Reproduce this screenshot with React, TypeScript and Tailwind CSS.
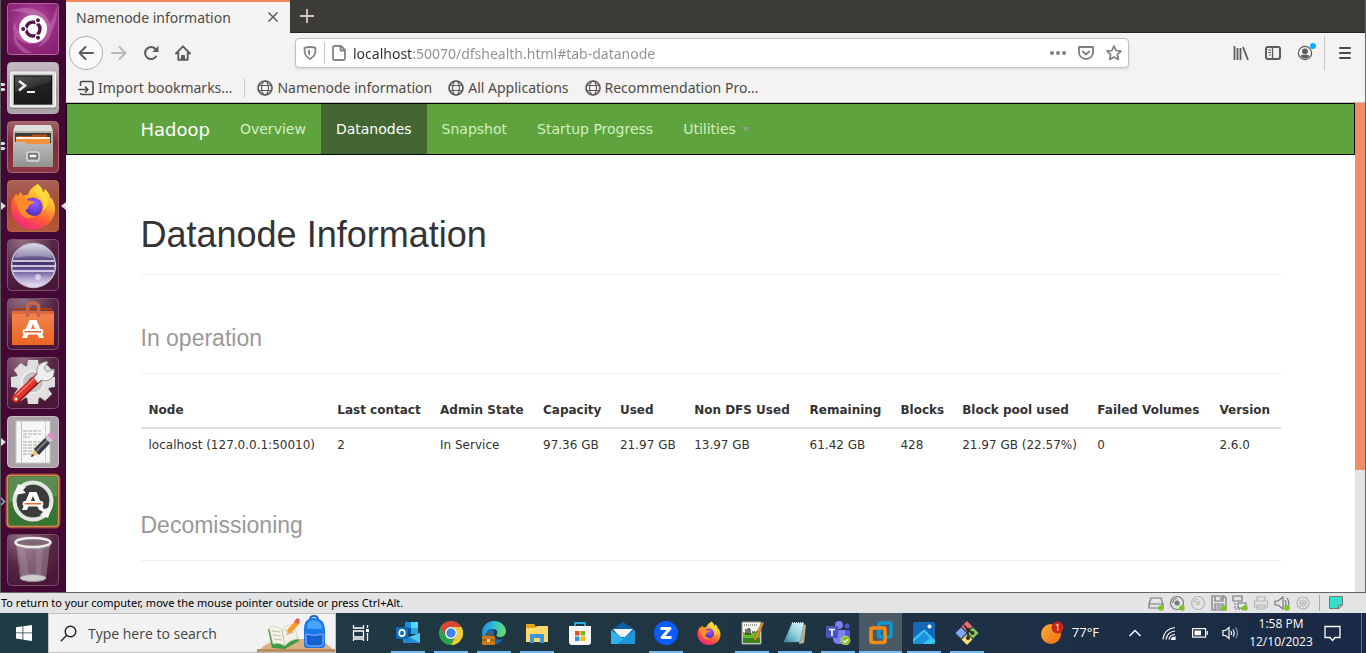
import React from "react";

type IconProps = { className?: string };

const FirefoxArt = ({ id, className }: { id: string; className?: string }) => (
  <svg viewBox="0 0 48 48" className={className} aria-hidden="true">
    <defs>
      <linearGradient id={id + "a"} x1="0.8" y1="0" x2="0.25" y2="1">
        <stop offset="0" stopColor="#fff44f" />
        <stop offset="0.35" stopColor="#ffb02e" />
        <stop offset="0.65" stopColor="#ff5a36" />
        <stop offset="1" stopColor="#f0208a" />
      </linearGradient>
      <radialGradient id={id + "b"} cx="0.6" cy="0.3" r="0.7">
        <stop offset="0" stopColor="#a05cff" />
        <stop offset="0.6" stopColor="#6b3fe0" />
        <stop offset="1" stopColor="#4a2bb5" />
      </radialGradient>
    </defs>
    <path
      d="M29 1c4 3 5 6 6 9 1-1 1-2 1-4 4 3 6 7 6 10l1-1c2 3 4 7 4 12 0 12-10 21-23 21S1 38 1 26C1 20 3 15 7 11l1 3 3-5 2 4c2 0 4-1 6-1 1-5 5-8 10-11z"
      fill={"url(#" + id + "a)"}
    />
    <circle cx="24" cy="25" r="10" fill={"url(#" + id + "b)"} />
    <path
      d="M6 14c4-2 9 0 12 4l7 1c0 3-4 3-5 4-1 2 0 4-4 5 2 5 7 7 12 6-4 4-12 4-16-1-4-5-6-11-6-19z"
      fill="#ff8a2b"
    />
    <path d="M27 5c-4 6 6 9 8 15 1 4 0 7-2 9 6-3 8-8 6-14-2-5-8-6-12-10z" fill="#ffd83b" />
  </svg>
);

const UbuntuArt = () => (
  <svg viewBox="0 0 52 52" className="size-full" aria-hidden="true">
    <defs>
      <radialGradient id="dash" cx="0.5" cy="0.4" r="0.7">
        <stop offset="0" stopColor="#c06cae" />
        <stop offset="0.6" stopColor="#962a80" />
        <stop offset="1" stopColor="#84206e" />
      </radialGradient>
    </defs>
    <rect x="0.5" y="0.5" width="51" height="51" rx="3" fill="url(#dash)" stroke="#b761a4" />
    <g fill="#e3b0d8" opacity="0.3">
      <path d="M2 8c20-8 42 0 42 20 0 8-6 14-14 16 18-14 4-36-28-36z" />
      <path d="M50 2C52 28 36 46 18 40 6 36 4 26 8 18c0 20 34 24 42-16z" />
      <path d="M8 28c0 14 14 20 18 22h-8C8 44 4 36 8 28z" />
    </g>
    <circle cx="26" cy="26" r="14" fill="#fff" />
    <circle cx="26" cy="26" r="7" fill="none" stroke="#56164b" strokeWidth="3.400" />
    <g stroke="#fff" strokeWidth="1.200">
      <path d="M14 26h7M32 15.600l-4 7M32 36.400l-4-7" />
      <circle cx="16.200" cy="26" r="2.600" fill="#56164b" />
      <circle cx="31" cy="17.200" r="2.600" fill="#56164b" />
      <circle cx="31" cy="34.800" r="2.600" fill="#56164b" />
    </g>
  </svg>
);

const TerminalArt = () => (
  <svg viewBox="0 0 52 52" className="size-full" aria-hidden="true">
    <defs>
      <linearGradient id="scr" x1="0" y1="0" x2="0.4" y2="1">
        <stop offset="0" stopColor="#555" />
        <stop offset="0.5" stopColor="#333" />
        <stop offset="0.52" stopColor="#222" />
        <stop offset="1" stopColor="#1b1b1b" />
      </linearGradient>
      <linearGradient id="tbg" x1="0" y1="0" x2="0" y2="1">
        <stop offset="0" stopColor="#c4bcc2" />
        <stop offset="0.5" stopColor="#a49ba2" />
        <stop offset="1" stopColor="#aaa3a8" />
      </linearGradient>
    </defs>
    <rect x="0.5" y="0.5" width="51" height="51" rx="4" fill="url(#tbg)" stroke="#b8afb6" />
    <rect x="3" y="10" width="46" height="37" rx="1" fill="#8d888b" />
    <rect x="3.500" y="10" width="45" height="35" rx="1" fill="#e2e2e2" stroke="#f4f4f4" />
    <rect x="6" y="12.500" width="40" height="30.500" fill="#a5a5a5" />
    <rect x="7.500" y="14" width="37" height="28" fill="url(#scr)" stroke="#111" />
    <path d="M12 19l6 4.500-6 5" fill="none" stroke="#eee" strokeWidth="2.500" />
    <path d="M20 30h8" stroke="#eee" strokeWidth="2" />
  </svg>
);

const FilesArt = () => (
  <svg viewBox="0 0 52 52" className="size-full" aria-hidden="true">
    <defs>
      <linearGradient id="cab" x1="0" y1="0" x2="0" y2="1">
        <stop offset="0" stopColor="#bcbcba" />
        <stop offset="1" stopColor="#92928f" />
      </linearGradient>
      <linearGradient id="fbg" x1="0" y1="0" x2="0" y2="1">
        <stop offset="0" stopColor="#a2656c" />
        <stop offset="0.4" stopColor="#7d2c3a" />
        <stop offset="1" stopColor="#8c3844" />
      </linearGradient>
    </defs>
    <rect x="0.5" y="0.5" width="51" height="51" rx="4" fill="url(#fbg)" stroke="#ad6970" />
    <path d="M8 5q0-1 1-1h34q1 0 1 1l2 6v35H6V11z" fill="#b2b2af" />
    <path d="M8 5q0-1 1-1h34q1 0 1 1l2 5H6z" fill="#dededc" />
    <rect x="8" y="12" width="36" height="10" fill="#403a35" />
    <path d="M10 15h14l2-1.500h14V21H10z" fill="#b85320" />
    <rect x="9" y="16" width="34" height="2" fill="#fff3dc" />
    <path d="M9 18h34v5H9z" fill="#f0923e" />
    <path d="M6 21h12l2 2h26v23H6z" fill="url(#cab)" />
    <rect x="20" y="31" width="12" height="9" rx="2" fill="#999" stroke="#dadada" strokeWidth="1.500" />
    <rect x="22" y="33" width="8" height="4" fill="#eee" stroke="#4d4d4d" />
  </svg>
);

const FirefoxTile = () => (
  <span className="flex size-full items-center justify-center rounded border border-[#b5664c] bg-linear-to-b from-[#a86158] via-[#a44b31] to-[#b8573a]">
    <FirefoxArt id="ffl" className="size-[46px]" />
  </span>
);

const Glass = ({ id }: { id: string }) => (
  <>
    <defs>
      <radialGradient id={id} cx="0.3" cy="0" r="1">
        <stop offset="0" stopColor="#927083" />
        <stop offset="0.6" stopColor="#572745" />
        <stop offset="1" stopColor="#4a1739" />
      </radialGradient>
    </defs>
    <rect x="0.5" y="0.5" width="51" height="51" rx="4" fill={"url(#" + id + ")"} stroke="#7b506d" />
  </>
);

const EclipseArt = () => (
  <svg viewBox="0 0 52 52" className="size-full" aria-hidden="true">
    <Glass id="g1" />
    <defs>
      <linearGradient id="ecl" x1="0" y1="0" x2="0" y2="1">
        <stop offset="0" stopColor="#e8e5f0" />
        <stop offset="0.2" stopColor="#8c83aa" />
        <stop offset="0.45" stopColor="#43316c" />
        <stop offset="0.62" stopColor="#6a5a98" />
        <stop offset="0.8" stopColor="#b5aad4" />
        <stop offset="1" stopColor="#eeeaf7" />
      </linearGradient>
    </defs>
    <circle cx="26.500" cy="26.500" r="22" fill="url(#ecl)" stroke="#c8c2d9" strokeWidth="1.500" />
    <path d="M8 19q4-14 19-14t18 14q-18-4-37 0z" fill="#d8d4e6" opacity="0.4" />
    <path d="M6 22h41M5 27h43M6 32h41" stroke="#f0edfa" strokeWidth="1.500" />
    <circle cx="31" cy="38" r="3" fill="#fff" opacity="0.5" />
  </svg>
);

const LogoMark = () => (
  <>
    <path d="M22.500 22h7L37 40h-5l-6-14-6 14h-5z" fill="#fff" />
    <rect x="16.500" y="32" width="19" height="3.500" rx="1.700" fill="#e8672a" stroke="#fff" strokeWidth="1.800" />
  </>
);

const SoftwareArt = () => (
  <svg viewBox="0 0 52 52" className="size-full" aria-hidden="true">
    <Glass id="g2" />
    <defs>
      <linearGradient id="bag" x1="0" y1="0" x2="0" y2="1">
        <stop offset="0" stopColor="#f08552" />
        <stop offset="1" stopColor="#ee6522" />
      </linearGradient>
    </defs>
    <path d="M5 12l3-2h36l3 2z" fill="#a83e16" />
    <rect x="5" y="13" width="42" height="34" fill="url(#bag)" />
    <path d="M5 13h42v3H5z" fill="#d2572a" opacity="0.6" />
    <path d="M20.500 19V9q0-4 5.500-4t5.500 4v10" fill="none" stroke="#c2664c" strokeWidth="3.500" />
    <LogoMark />
  </svg>
);

const teeth = [0, 45, 90, 135, 180, 225, 270, 315];
const SettingsArt = () => (
  <svg viewBox="0 0 52 52" className="size-full" aria-hidden="true">
    <Glass id="g3" />
    {teeth.map((t) => (
      <path key={t} d="M20 10l1-7h10l1 7z" fill="#dedede" transform={"rotate(" + t + " 26 25)"} />
    ))}
    <circle cx="26" cy="25" r="17" fill="#e0e0e0" />
    <circle cx="26" cy="25" r="11" fill="#c5c5c5" stroke="#f1f1f1" strokeWidth="1.500" />
    <circle cx="26" cy="25" r="5" fill="#82767e" />
    <path d="M9 42L32 20" stroke="#951b17" strokeWidth="9" strokeLinecap="round" />
    <path d="M9 41L32 19" stroke="#dc352c" strokeWidth="7" strokeLinecap="round" />
    <path d="M10 38L30 19" stroke="#f17b6c" strokeWidth="1.500" strokeLinecap="round" />
    <path d="M30 17q-1-9 5-11 3-2 6-1l-4 6 3 4 7-3q1 8-5 11-4 2-8 0l-3 3-4-5z" fill="#eee" stroke="#999" />
    <circle cx="9" cy="42" r="1.500" fill="#fff" />
  </svg>
);

const textLines = [15, 18, 21, 26, 29, 32, 35, 38];
const EditorArt = () => (
  <svg viewBox="0 0 52 52" className="size-full" aria-hidden="true">
    <rect x="0.5" y="0.5" width="51" height="51" rx="4" fill="#aaa2a8" stroke="#c5bec3" />
    <rect x="9" y="5" width="34" height="42" fill="#f6f6f4" stroke="#c7c5c4" />
    <path d="M14.500 5v42" stroke="#f2aaa4" />
    <path d="M38.500 5v42" stroke="#b8d4e8" />
    {textLines.map((y, i) => (
      <path key={y} d={"M16 " + y + "h" + (i === 2 ? 7 : i > 4 ? 15 : 18)} stroke="#aaa" strokeDasharray="4 1" />
    ))}
    <path d="M24 41l3-8 5 5z" fill="#eac681" />
    <path d="M27 33l13-13 5 5-13 14z" fill="#343a3d" />
    <path d="M29 34l13-13 1.500 1.500L30 36z" fill="#747b7f" />
    <path d="M38 22l3-3 5 5-3 3z" fill="#cfcfcf" />
    <path d="M40 19l2-2q3-1 5 1.500t0 4.500l-2 1z" fill="#dc8fc0" />
    <path d="M24 41l1-3 2 2z" fill="#222" />
  </svg>
);

const UpdaterArt = () => (
  <svg viewBox="0 0 52 52" className="size-full overflow-visible" aria-hidden="true">
    <rect x="0" y="0" width="52" height="52" rx="4" fill="none" stroke="#ee7440" strokeWidth="3" opacity="0.5" />
    <rect x="0.5" y="0.5" width="51" height="51" rx="3" fill="#397532" stroke="#d38a52" strokeWidth="1.500" />
    <path d="M2 2h48v20Q26 12 2 28z" fill="#80a875" opacity="0.45" />
    <circle cx="26" cy="26" r="16" fill="#3b3b3b" />
    <circle cx="26" cy="26" r="18.500" fill="none" stroke="#e5e5e3" strokeWidth="4" />
    <path d="M11 9l-4 11 12-2-3-3 3-3z" fill="#f6f6f6" />
    <path d="M41 43l4-11-12 3 3 2-3 3z" fill="#f6f6f6" />
    <g transform="translate(0 -5)">
      <LogoMark />
    </g>
  </svg>
);

const TrashArt = () => (
  <svg viewBox="0 0 52 52" className="size-full" aria-hidden="true">
    <Glass id="g4" />
    <path d="M9 10l4 35q13 6 26 0l4-35z" fill="#b6a3b4" opacity="0.45" />
    <path d="M11 14h7l4 28h-7zM29 14h7l-2 28h-5z" fill="#ddd" opacity="0.15" />
    <ellipse cx="26" cy="44" rx="13" ry="3.500" fill="#cfcacc" stroke="#9d9099" />
    <ellipse cx="26" cy="8.500" rx="17.500" ry="4.500" fill="#80687a" stroke="#eeeeec" strokeWidth="2.500" />
    <path d="M9 12q17 6 34 0" fill="none" stroke="#a99ca5" />
  </svg>
);

const launcher: { name: string; art: () => React.ReactElement; mark?: "two" | "one" | "focus" | "blue" }[] = [
  { name: "Search your computer", art: UbuntuArt },
  { name: "Terminal", art: TerminalArt, mark: "two" },
  { name: "Files", art: FilesArt, mark: "two" },
  { name: "Firefox", art: FirefoxTile, mark: "focus" },
  { name: "Eclipse", art: EclipseArt },
  { name: "Software", art: SoftwareArt },
  { name: "Settings", art: SettingsArt },
  { name: "Text Editor", art: EditorArt, mark: "one" },
  { name: "Updater", art: UpdaterArt, mark: "blue" },
  { name: "Trash", art: TrashArt },
];

function Launcher() {
  return (
    <nav aria-label="Launcher" className="flex w-[66px] shrink-0 flex-col gap-[7px] border-l border-[#5a5a5a] bg-[#430833] py-[3px]">
      {launcher.map(({ name, art: Art, mark }) => (
        <div key={name} className="flex h-[52px] items-center">
          <svg viewBox="0 0 6 12" className="h-3 w-[6px]" aria-hidden="true">
            {mark === "two" && <path d="M0 1h3l1.500 1.500L3 4H0zM0 6h3l1.500 1.500L3 9H0z" fill="#ddd" />}
            {(mark === "one" || mark === "focus") && <path d="M0 2l5 4-5 4z" fill="#ddd" />}
            {mark === "blue" && <path d="M0 3l3.500 3.500L0 10" fill="none" stroke="#7fc0f0" strokeWidth="1.300" />}
          </svg>
          <button type="button" aria-label={name} className="size-[52px]">
            <Art />
          </button>
          <svg viewBox="0 0 6 12" className="ml-px h-3 w-[6px]" aria-hidden="true">
            {mark === "focus" && <path d="M6 2L1 6l5 4z" fill="#ddd" />}
          </svg>
        </div>
      ))}
    </nav>
  );
}

const Globe = () => (
  <svg viewBox="0 0 16 16" className="size-4 shrink-0" fill="none" stroke="#5c5c5b" aria-hidden="true">
    <circle cx="8" cy="8" r="7" strokeWidth="1.700" />
    <ellipse cx="8" cy="8" rx="3.500" ry="7" strokeWidth="1.200" />
    <path d="M1.500 5.500h13M1.500 10.500h13" strokeWidth="1.200" />
  </svg>
);

const toolBtn = "flex w-8 items-center justify-center text-[#5c5c5b]";

function BrowserChrome() {
  return (
    <header className="bg-[#f4f3f1] font-['Noto_Sans','Open_Sans',sans-serif] text-[#4c4b49]">
      <div className="flex h-[33px] border-b border-[#262522] bg-[#3c3b37]">
        <div className="-mb-px flex w-56 items-center justify-between border-t-2 border-[#f0875f] bg-[#f4f3f1] pr-3 pb-px pl-[10px] text-[14px]">
          <span className="whitespace-nowrap">Namenode information</span>
          <button type="button" aria-label="Close tab">
            <svg viewBox="0 0 10 10" className="size-[10px]" stroke="#5c5c5b" strokeWidth="1.500" aria-hidden="true">
              <path d="M0.500 0.500l9 9M9.500 0.500l-9 9" />
            </svg>
          </button>
        </div>
        <button type="button" aria-label="New tab" className="flex w-[34px] items-center justify-center">
          <svg viewBox="0 0 14 14" className="size-[14px]" stroke="#cfc8c6" strokeWidth="1.800" aria-hidden="true">
            <path d="M7 0v14M0 7h14" />
          </svg>
        </button>
      </div>
      <div className="flex h-10 items-center pl-[3px]">
        <button type="button" aria-label="Back" className="flex size-[34px] items-center justify-center rounded-full border border-[#adaba8] bg-[#fafafa]">
          <svg viewBox="0 0 16 16" className="size-4" fill="none" stroke="#5c5c5b" strokeWidth="2" strokeLinecap="round" strokeLinejoin="round" aria-hidden="true">
            <path d="M7.500 2L1.500 8l6 6M1.500 8H15" />
          </svg>
        </button>
        <button type="button" aria-label="Forward" className={toolBtn}>
          <svg viewBox="0 0 16 16" className="size-4" fill="none" stroke="#bab9b7" strokeWidth="2" strokeLinecap="round" strokeLinejoin="round" aria-hidden="true">
            <path d="M8.500 2l6 6-6 6M14.500 8H1" />
          </svg>
        </button>
        <button type="button" aria-label="Reload" className={toolBtn}>
          <svg viewBox="0 0 16 16" className="size-4" aria-hidden="true">
            <path d="M13 11.500A6 6 0 1 1 12.500 4" fill="none" stroke="currentColor" strokeWidth="2" strokeLinecap="round" />
            <path d="M15.500 0.800V7H9.300z" fill="currentColor" />
          </svg>
        </button>
        <button type="button" aria-label="Home" className={toolBtn}>
          <svg viewBox="0 0 16 16" className="size-4" fill="none" stroke="currentColor" strokeWidth="1.900" strokeLinecap="round" strokeLinejoin="round" aria-hidden="true">
            <path d="M1 8.500L8 1.300l7 7.200M3.300 8v6.700h9.400V8" />
            <path d="M6.500 14.500v-4h3v4" fill="currentColor" strokeWidth="1" />
          </svg>
        </button>
        <div className="mr-[99px] ml-24 flex h-[30px] flex-1 items-center rounded border border-[#c4c1bd] bg-white px-[6px] shadow-sm">
          <svg viewBox="0 0 14 14" className="ml-px size-[14px]" fill="none" stroke="#858483" strokeWidth="1.800" aria-hidden="true">
            <path d="M7 1C5 1 3 1.300 1.500 2c0 5 0 8 5.500 11C12.500 10 12.500 7 12.500 2 11 1.300 9 1 7 1z" />
            <path d="M7 4v6C5 8.500 4.800 7 4.800 4.300z" fill="#858483" stroke="none" />
          </svg>
          <span className="ml-[7px] h-[22px] w-px bg-[#c9c6c3]" />
          <svg viewBox="0 0 14 16" className="ml-[7px] h-4 w-[14px]" fill="none" stroke="#858483" strokeWidth="1.800" strokeLinejoin="round" aria-hidden="true">
            <path d="M2.500 1H9l4 4v8.500q0 1.500-1.500 1.500h-9Q1 15 1 13.500v-11Q1 1 2.500 1zM8.500 1.500V5.500H13" />
          </svg>
          <input
            type="text"
            aria-label="Address"
            defaultValue="localhost:50070/dfshealth.html#tab-datanode"
            className="ml-[7px] h-7 min-w-0 flex-1 bg-[linear-gradient(90deg,#2e2e2d_59px,#918f8d_59px)] bg-clip-text text-[14px] text-transparent outline-none"
          />
          <div className="flex items-center gap-3 text-[#807f7e]">
            <button type="button" aria-label="Page actions">
              <svg viewBox="0 0 16 16" className="size-4" fill="currentColor" aria-hidden="true">
                <circle cx="2" cy="8" r="2" />
                <circle cx="8" cy="8" r="2" />
                <circle cx="14" cy="8" r="2" />
              </svg>
            </button>
            <button type="button" aria-label="Save to Pocket">
              <svg viewBox="0 0 16 16" className="size-4" fill="none" stroke="currentColor" strokeWidth="1.800" strokeLinecap="round" strokeLinejoin="round" aria-hidden="true">
                <path d="M1 2h14v5.500a7 6.500 0 0 1-14 0z" />
                <path d="M4.800 6.500L8 9.500l3.200-3" />
              </svg>
            </button>
            <button type="button" aria-label="Bookmark this page">
              <svg viewBox="0 0 16 16" className="size-4" fill="none" stroke="currentColor" strokeWidth="1.700" strokeLinejoin="round" aria-hidden="true">
                <path d="M8 1l2.100 4.500 4.900.6-3.600 3.400.9 5L8 12.100 3.700 14.500l.9-5L1 6.100l4.900-.6z" />
              </svg>
            </button>
          </div>
        </div>
        <button type="button" aria-label="Library" className="ml-[-3px] flex w-8 items-center justify-center text-[#5c5c5b]">
          <svg viewBox="0 0 16 16" className="size-4" fill="none" stroke="currentColor" strokeWidth="1.800" aria-hidden="true">
            <path d="M1.500 1v14M4.500 3v12M7.500 3v12M10 2l5 13" />
          </svg>
        </button>
        <button type="button" aria-label="Sidebars" className={toolBtn}>
          <svg viewBox="0 0 16 16" className="size-4" fill="none" stroke="currentColor" aria-hidden="true">
            <rect x="1" y="2" width="14" height="12" rx="2" strokeWidth="2" />
            <path d="M7.500 2v12" strokeWidth="1.300" />
            <path d="M3 5h3M3 7.500h3M4 10h2" />
          </svg>
        </button>
        <button type="button" aria-label="Account" className={"relative " + toolBtn}>
          <svg viewBox="0 0 16 16" className="size-4" aria-hidden="true">
            <circle cx="8" cy="8" r="6.600" fill="none" stroke="currentColor" strokeWidth="1.200" />
            <circle cx="8" cy="6.300" r="2.900" fill="currentColor" />
            <path d="M3.500 11q1.500-1.500 3-1.200h3q1.500-.3 3 1.200-1.500 2.500-4.500 2.500T3.500 11z" fill="currentColor" />
          </svg>
          <span className="absolute -top-[2px] right-[5px] size-[6px] rounded-full bg-[#00b3f4]" />
        </button>
        <span className="ml-[3px] h-[34px] w-px bg-[#c9c6c3]" />
        <button type="button" aria-label="Open menu" className="flex w-10 items-center justify-center">
          <svg viewBox="0 0 12 12" className="size-3" stroke="#4c4b49" strokeWidth="2" strokeLinecap="round" aria-hidden="true">
            <path d="M1 1h10M1 6h10M1 11h10" />
          </svg>
        </button>
      </div>
      <div className="flex h-[30px] items-center border-b border-[#c4c0bc] pl-3 text-[14px] whitespace-nowrap">
        <a href="#import" className="flex items-center gap-1">
          <svg viewBox="0 0 16 16" className="size-4" fill="none" stroke="#4c4b49" strokeWidth="1.800" strokeLinejoin="round" aria-hidden="true">
            <path d="M2.500 6V3q0-1.500 1.500-1.500h9.500Q15 1.500 15 3v10q0 1.500-1.500 1.500H4q-1.500 0-1.500-1.500M0 9.500h10M7 6.500l3 3-3 3" strokeWidth="1.600" />
          </svg>
          Import bookmarks…
        </a>
        <span className="mx-3 h-5 w-px bg-[#d0cdca]" />
        <div className="flex items-center gap-4">
          {["Namenode information", "All Applications", "Recommendation Pro…"].map((b) => (
            <a key={b} href="#bookmark" className="flex items-center gap-1">
              <Globe />
              {b}
            </a>
          ))}
        </div>
      </div>
    </header>
  );
}

const columns = ["Node", "Last contact", "Admin State", "Capacity", "Used", "Non DFS Used", "Remaining", "Blocks", "Block pool used", "Failed Volumes", "Version"];
const row = ["localhost (127.0.0.1:50010)", "2", "In Service", "97.36 GB", "21.97 GB", "13.97 GB", "61.42 GB", "428", "21.97 GB (22.57%)", "0", "2.6.0"];

const heading = "mt-10 mb-5 border-b border-[#eee] font-['Liberation_Sans',Arial,sans-serif]";
const subheading = heading + " pb-3 text-[23px] leading-[46px] text-[#999]";

function HadoopPage() {
  return (
    <div className="min-w-0 flex-1 bg-white font-['DejaVu_Sans',sans-serif] text-[#333]">
      <nav className="border border-[#080808] bg-[#5fa33e] text-[14px]">
        <div className="mx-auto flex h-[50px] max-w-[1170px] items-center px-[15px] whitespace-nowrap">
          <a href="#hadoop" className="mr-[15px] text-[18px] text-white">
            Hadoop
          </a>
          {["Overview", "Datanodes", "Snapshot", "Startup Progress"].map((t) => (
            <a
              key={t}
              href="#tab"
              className={t === "Datanodes" ? "flex h-full items-center bg-[#446633] px-[15px] text-white" : "flex h-full items-center px-[15px] text-[#d2f0c0]"}
            >
              {t}
            </a>
          ))}
          <a href="#utilities" className="flex h-full items-center gap-[6px] px-[15px] text-[#d2f0c0]">
            Utilities
            <span className="border-x-4 border-t-4 border-x-transparent border-t-[#999]" />
          </a>
        </div>
      </nav>
      <main className="mx-auto max-w-[1170px] px-[15px] pt-5 pb-2">
        <h1 className={heading + " pb-[19px] text-[36px] leading-10"}>Datanode Information</h1>
        <h2 className={subheading}>In operation</h2>
        <table className="w-full text-left text-[12px] leading-[17px]">
          <thead>
            <tr className="border-b-2 border-[#ddd]">
              {columns.map((c) => (
                <th key={c} scope="col" className="p-2 font-bold whitespace-nowrap">
                  {c}
                </th>
              ))}
            </tr>
          </thead>
          <tbody>
            <tr>
              {row.map((c, i) => (
                <td key={i} className="p-2 whitespace-nowrap">
                  {c}
                </td>
              ))}
            </tr>
          </tbody>
        </table>
        <h2 className={subheading}>Decomissioning</h2>
      </main>
    </div>
  );
}

const Dot = () => <circle cx="13" cy="13" r="2.800" fill="#7fc31c" stroke="none" />;

const devices: { name: string; on?: boolean; faint?: boolean; body: React.ReactElement }[] = [
  { name: "Hard disk", on: true, body: <path d="M3 3h10l2 6v4H1V9zM1 9h14" /> },
  { name: "CD/DVD", on: true, body: <><circle cx="8" cy="8" r="6.500" /><circle cx="8" cy="8" r="2" fill="#777" /><path d="M8 3.500A4.500 4.500 0 0 0 3.500 8" /></> },
  { name: "CD/DVD 2", faint: true, body: <><circle cx="8" cy="8" r="6.500" /><circle cx="8" cy="8" r="1.500" /><path d="M8 4a4 4 0 0 0-4 4" /></> },
  { name: "Floppy", on: true, body: <path d="M1 1h12l2 2v12H1zM4 1v5h8V1M10 2v3M4 15V9h8v6M5.500 11h5M5.500 13h5" /> },
  { name: "Network adapter", on: true, body: <><path d="M1 1h9v5H1zM6 8h8v5H6z" /><path d="M3 8v6h10" strokeDasharray="2 1" /></> },
  { name: "Printer", faint: true, body: <path d="M4 6V2h8v4M1.500 6h13v6h-13zM4 10h8v4H4z" /> },
  { name: "Sound", on: true, body: <path d="M1 6h3l5-4v12l-5-4H1zM11 5q2 3 0 6M13 3q3 4 1 8" /> },
  { name: "Camera", faint: true, body: <><circle cx="8" cy="8" r="6" /><circle cx="8" cy="8" r="3" /><circle cx="8" cy="8" r="1" /></> },
];

function StatusBar() {
  return (
    <div className="flex h-[21px] items-center border-t border-[#666] bg-[#e3e4e6] pr-[22px] pl-px font-['Noto_Sans','Open_Sans',sans-serif] text-[11px] text-black">
      <span className="flex-1 whitespace-nowrap">To return to your computer, move the mouse pointer outside or press Ctrl+Alt.</span>
      <div className="flex items-center gap-[5px]">
        {devices.map((d) => (
          <button key={d.name} type="button" aria-label={d.name}>
            <svg viewBox="0 0 16 16" className="size-4" fill="none" stroke={d.faint ? "#b5b5b5" : "#777"} strokeWidth="1.200" aria-hidden="true">
              {d.body}
              {d.on && <Dot />}
            </svg>
          </button>
        ))}
        <span className="mx-[3px] h-4 w-px bg-[#aaa]" />
        <button type="button" aria-label="Messages">
          <svg viewBox="0 0 16 16" className="size-4" aria-hidden="true">
            <path d="M1.500 1.500h13v8l-4 4h-9z" fill="#35e0cb" stroke="#777" />
            <path d="M14.500 10h-4v4z" fill="#8aeee0" stroke="#777" />
          </svg>
        </button>
      </div>
    </div>
  );
}

const s24 = "size-6";
const OutlookArt = () => (
  <svg viewBox="0 0 24 24" className={s24} aria-hidden="true">
    <path d="M9 1h12v11H9z" fill="#1490df" />
    <path d="M15 1h7v6h-7z" fill="#50d9ff" />
    <path d="M9 7h6v6H9z" fill="#0a4f9e" />
    <path d="M15 7h7v6h-7z" fill="#28a8ea" />
    <path d="M7 12l8 5 9-5v10H7z" fill="#1e8ad6" />
    <path d="M24 12v10L13 16z" fill="#50c8f5" />
    <rect x="0" y="6" width="12" height="12" rx="1" fill="#0f6cbd" />
    <ellipse cx="6" cy="12" rx="2.800" ry="3.200" fill="none" stroke="#fff" strokeWidth="1.700" />
  </svg>
);
const ChromeArt = () => (
  <svg viewBox="0 0 24 24" className={s24} aria-hidden="true">
    <circle cx="12" cy="12" r="12" fill="#2ba24c" />
    <path d="M12 0a12 12 0 0 1 10.400 6H12a6 6 0 0 0-5.200 9L1.600 6A12 12 0 0 1 12 0z" fill="#dc4437" />
    <path d="M22.400 6A12 12 0 0 1 12 24l5.200-9A6 6 0 0 0 12 6z" fill="#fcc934" />
    <circle cx="12" cy="12" r="6" fill="#fff" />
    <circle cx="12" cy="12" r="4.700" fill="#4285e8" />
  </svg>
);
const EdgeArt = () => (
  <svg viewBox="0 0 24 24" className={s24} aria-hidden="true">
    <defs>
      <linearGradient id="edg" x1="0" y1="0.300" x2="1" y2="0.500">
        <stop offset="0" stopColor="#1b8fd8" />
        <stop offset="0.500" stopColor="#35c1d0" />
        <stop offset="1" stopColor="#69db5c" />
      </linearGradient>
    </defs>
    <path d="M0 12C0 5 5 0 12 0s12 5 12 10c0 4-3 6-6 6-4 0-4-2-3-3 1-2 0-5-4-5-6 0-8 6-6 12-3-2-5-5-5-8z" fill="url(#edg)" />
    <path d="M5 10C9 6 13 8 12 12c-2 5 4 8 9 6-2 4-6 6-10 5C5 22 2 15 5 10z" fill="#1566b5" />
    <rect x="0" y="15" width="13" height="9" rx="1" fill="#c77a17" />
    <path d="M0 19h13" stroke="#7d4706" />
    <path d="M4 15v-2h5v2" fill="none" stroke="#8d500c" strokeWidth="1.500" />
    <rect x="5" y="18" width="3" height="3" fill="#ffd36a" />
  </svg>
);
const ExplorerArt = () => (
  <svg viewBox="0 0 24 24" className={s24} aria-hidden="true">
    <path d="M1 3h8l2 3h12v15H1z" fill="#e5a516" />
    <path d="M1 7h9l2-2h11v16H1z" fill="#ffd968" />
    <path d="M5 14q0-1 1-1h12q1 0 1 1v8h-4v-5H9v5H5z" fill="#3b97dc" />
  </svg>
);
const StoreArt = () => (
  <svg viewBox="0 0 24 24" className={s24} aria-hidden="true">
    <path d="M7 6V2h10v4" fill="none" stroke="#28aee5" strokeWidth="1.800" />
    <path d="M1 5h22v16q0 3-3 3H4q-3 0-3-3z" fill="#f7f7f7" />
    <path d="M7 10h4.500v4.500H7z" fill="#e84e1b" />
    <path d="M12.500 10H17v4.500h-4.500z" fill="#80b71c" />
    <path d="M7 15.500h4.500V20H7z" fill="#219fe0" />
    <path d="M12.500 15.500H17V20h-4.500z" fill="#fcb714" />
  </svg>
);
const MailArt = () => (
  <svg viewBox="0 0 24 24" className={s24} aria-hidden="true">
    <path d="M0 9l12-8 12 8v4H0z" fill="#0f5ea8" />
    <path d="M2 8h20l-8 8H9z" fill="#f2f5fa" />
    <path d="M0 9l12 8 12-8v14H0z" fill="#2fb3ef" />
    <path d="M24 9v14H6z" fill="#1b96dc" />
  </svg>
);
const ZoomArt = () => (
  <svg viewBox="0 0 24 24" className={s24} aria-hidden="true">
    <circle cx="12" cy="12" r="12" fill="#0b5cff" />
    <path d="M6.500 7.500H16L8 16.500h9.500" fill="none" stroke="#fff" strokeWidth="3" strokeLinejoin="round" />
  </svg>
);
const NppArt = () => (
  <svg viewBox="0 0 24 24" className={s24} aria-hidden="true">
    <path d="M2 1h19v22H2z" fill="#f5f5ec" stroke="#999" />
    <path d="M3 11q9 3 17-3v14H3z" fill="#66bd29" />
    <path d="M3 17h17v5H3z" fill="#35861b" />
    <path d="M4 4h14" stroke="#9ba69b" strokeDasharray="1 1" strokeWidth="2" />
    <path d="M6 14V8M8 14V8q2-1 2 2v4M12 11h3M16 11h2" fill="none" stroke="#222" strokeWidth="1.200" />
    <path d="M22 1l2 1-8 17-2 1v-3z" fill="#e59122" stroke="#8b4c13" strokeWidth="0.500" />
  </svg>
);
const NotepadArt = () => (
  <svg viewBox="0 0 24 24" className={s24} aria-hidden="true">
    <defs>
      <linearGradient id="ntp" x1="0" y1="1" x2="1" y2="0">
        <stop offset="0" stopColor="#2f8aa0" />
        <stop offset="0.500" stopColor="#94d2de" />
        <stop offset="1" stopColor="#e2f4f7" />
      </linearGradient>
    </defs>
    <path d="M19 3l4 1-2 18-5 1z" fill="#b9b08e" />
    <path d="M9 2h12l-4 19H1z" fill="url(#ntp)" stroke="#5e8c98" strokeWidth="0.500" />
    <path d="M9 2h12" stroke="#fff" strokeWidth="1.500" strokeDasharray="1 1" />
  </svg>
);
const TeamsArt = () => (
  <svg viewBox="0 0 24 24" className="h-6 w-[26px]" aria-hidden="true">
    <circle cx="13" cy="4" r="4" fill="#7b83eb" />
    <circle cx="21" cy="5" r="2.500" fill="#5059c9" />
    <path d="M16 9h8v6q0 4-4 4h-4z" fill="#5059c9" />
    <path d="M7 9h12v8q0 6-6 6t-6-6z" fill="#7b83eb" />
    <rect x="0" y="5" width="12" height="12" rx="1" fill="#4b53bc" />
    <path d="M3 8.500h6M6 8.500V15" stroke="#fff" strokeWidth="1.600" />
    <circle cx="19.500" cy="19.500" r="4.500" fill="#8cbd18" stroke="#fff" strokeWidth="0.500" />
    <path d="M17.500 19.500l1.500 1.700 3-3" fill="none" stroke="#fff" strokeWidth="1.300" />
  </svg>
);
const VmwareArt = () => (
  <svg viewBox="0 0 24 24" className={s24} fill="none" strokeWidth="3.600" aria-hidden="true">
    <rect x="10" y="2" width="12" height="14" rx="1.500" stroke="#0f95d4" />
    <rect x="2" y="7" width="14" height="14.500" rx="1.500" stroke="#f58b14" />
    <path d="M10 9v5.500q0 1.500 1.500 1.500H15" stroke="#0f95d4" />
  </svg>
);
const PhotosArt = () => (
  <svg viewBox="0 0 24 24" className={s24} aria-hidden="true">
    <rect x="1" y="1" width="22" height="22" rx="2" fill="#1667b8" />
    <path d="M1 18l10-9q1-1 2 0l10 10v2q0 2-2 2H3q-2 0-2-2z" fill="#39c4f0" />
    <path d="M1 21L12 11l6 6-7 6H3z" fill="#1d91de" />
    <circle cx="17.500" cy="5.500" r="2" fill="#fff" />
  </svg>
);
const GitArt = () => (
  <svg viewBox="0 0 24 24" className={s24} aria-hidden="true">
    <path d="M12 0l5.500 5.500L12 11 6.500 5.500z" fill="#ef6b6b" />
    <path d="M6 6.500L11.500 12 6 17.500.5 12z" fill="#7fa8f0" />
    <path d="M18 6.500l5.500 5.500-5.500 5.500-5.500-5.500z" fill="#83d05f" />
    <path d="M12 13l5.500 5.500L12 24l-5.500-5.500z" fill="#f6dd72" />
    <path d="M9 4l4 5v8M13 9l4 3" fill="none" stroke="#302c28" strokeWidth="1.600" />
    <circle cx="13" cy="8.500" r="2" fill="#302c28" />
    <circle cx="17.500" cy="12" r="2" fill="#302c28" />
    <circle cx="13" cy="17" r="2" fill="#302c28" />
  </svg>
);

const apps: { name: string; art: (p: IconProps) => React.ReactElement; run?: boolean; active?: boolean }[] = [
  { name: "Outlook", art: OutlookArt, run: true },
  { name: "Chrome", art: ChromeArt, run: true },
  { name: "Edge", art: EdgeArt, run: true },
  { name: "File Explorer", art: ExplorerArt, run: true },
  { name: "Store", art: StoreArt },
  { name: "Mail", art: MailArt },
  { name: "Zoom", art: ZoomArt, run: true },
  { name: "Firefox on host", art: () => <FirefoxArt id="fft" className={s24} /> },
  { name: "Notepad++", art: NppArt, run: true },
  { name: "Notepad", art: NotepadArt, run: true },
  { name: "Teams", art: TeamsArt, run: true },
  { name: "VMware", art: VmwareArt, run: true, active: true },
  { name: "Photos", art: PhotosArt, run: true },
  { name: "Git", art: GitArt, run: true },
];

function Taskbar() {
  return (
    <footer className="flex h-10 bg-linear-to-r from-[#1f3b44] via-[#203642] to-[#1a2946] font-['Open_Sans','Noto_Sans',sans-serif] text-white">
      <button type="button" aria-label="Start" className="flex w-12 items-center justify-center">
        <svg viewBox="0 0 16 16" className="size-4" fill="#fff" aria-hidden="true">
          <path d="M0 2.200l6.500-.9v6.200H0zM7.300 1.200L16 0v7.500H7.300zM0 8.300h6.500v6.200L0 13.600zM7.300 8.300H16V16l-8.700-1.200z" />
        </svg>
      </button>
      <label className="flex w-72 items-center border border-[#c3c3c3] bg-[#f2f2f2] pl-[11px] text-[#333]">
        <svg viewBox="0 0 17 17" className="size-[17px]" fill="none" stroke="#222" strokeWidth="1.400" aria-hidden="true">
          <circle cx="10.500" cy="6.500" r="5.300" />
          <path d="M6.500 10.500L0.800 16.200" />
        </svg>
        <input type="text" aria-label="Search" placeholder="Type here to search" className="ml-[11px] min-w-0 flex-1 bg-transparent text-[14px] outline-none placeholder:text-[#444]" />
        <svg viewBox="0 0 78 38" className="h-[38px] w-[78px]" aria-hidden="true">
          <path d="M0 38l8-7 12-6h44l14 12v1z" fill="#dcb083" />
          <path d="M0 35h78v3H0z" fill="#bd8d61" />
          <path d="M11 15l15 4 11-6 5 14-14 8-13-1z" fill="#3f9b45" />
          <path d="M12 13q8-2 13 3 5-6 12-6l4 15q-9 1-13 7-5-4-12-2z" fill="#f3f2e6" stroke="#c9c8b4" strokeWidth="0.600" />
          <path d="M25 16l3 16M15 17l8 1M16 21l8 1M17 25l8 1M28 17l8-3M29 21l8-3" stroke="#a9a890" strokeWidth="0.700" fill="none" />
          <path d="M30 20l1-5 8-9 4 3-8 9z" fill="#f79b2d" />
          <path d="M37 8l2-3q3-2 4 2l-2 3z" fill="#ea5a56" />
          <path d="M53 6q0-4 4-4t4 4" fill="none" stroke="#1b66c9" strokeWidth="2" />
          <path d="M47 15q0-11 10-11t11 11v16q0 3-3 3H50q-3 0-3-3z" fill="#1a7ae8" />
          <path d="M50 12q1-6 7-6t8 6v3H50z" fill="#46a3ff" />
          <path d="M49 20q8 3 17 0v9q0 3-4 3h-9q-4 0-4-3z" fill="#1560d2" stroke="#9bb3ff" />
        </svg>
      </label>
      <button type="button" aria-label="Task view" className="flex w-[50px] items-center justify-center">
        <svg viewBox="0 0 18 16" className="h-4 w-[18px]" fill="none" stroke="#fff" strokeWidth="1.300" aria-hidden="true">
          <path d="M1.500 0v3h10V0M1.500 6h10v6h-10zM1.500 16v-2h10v2M15.500 0v3M15.500 8v8" />
          <path d="M14 4h3v3h-3z" fill="#fff" stroke="none" />
        </svg>
      </button>
      {apps.map(({ name, art: Art, run, active }) => (
        <button
          key={name}
          type="button"
          aria-label={name}
          className={active ? "flex w-[43px] flex-col items-center bg-[#4a5963] pt-2" : "flex w-[43px] flex-col items-center pt-2"}
        >
          <Art />
          <span className={active ? "mt-auto h-[2px] w-full bg-[#76b9ed]" : run ? "mt-auto h-[2px] w-[34px] bg-[#76b9ed]" : "hidden"} />
        </button>
      ))}
      <div className="ml-auto flex items-center">
        <button type="button" aria-label="Weather" className="flex items-center gap-2 text-[13px]">
          <svg viewBox="0 0 24 24" className={s24} aria-hidden="true">
            <defs>
              <linearGradient id="sun" x1="0" y1="0" x2="1" y2="1">
                <stop offset="0" stopColor="#fbb03b" />
                <stop offset="1" stopColor="#ee6c10" />
              </linearGradient>
            </defs>
            <circle cx="11" cy="13" r="10" fill="url(#sun)" />
            <circle cx="17.500" cy="6.500" r="6" fill="#c4271b" />
            <text x="17.500" y="10" fontSize="9" fill="#fff" textAnchor="middle">1</text>
          </svg>
          77°F
        </button>
        <button type="button" aria-label="Show hidden icons" className="ml-[30px]">
          <svg viewBox="0 0 12 12" className="size-3" fill="none" stroke="#fff" strokeWidth="1.400" aria-hidden="true">
            <path d="M0.500 9L6 3.500 11.500 9" />
          </svg>
        </button>
        <button type="button" aria-label="Network" className="ml-[21px]">
          <svg viewBox="0 0 14 14" className="size-[14px]" fill="none" stroke="#fff" strokeWidth="1.200" aria-hidden="true">
            <path d="M1 13.500Q2 3 13 1.500M4 13.500Q5 6 13 5M7 13.500q.5-4.500 6-5" />
            <path d="M9.500 13.500q0-2 3.500-2.500v2.500z" fill="#fff" />
          </svg>
        </button>
        <button type="button" aria-label="Battery" className="ml-4">
          <svg viewBox="0 0 16 10" className="h-[10px] w-4" fill="none" stroke="#fff" strokeWidth="1.200" aria-hidden="true">
            <rect x="0.600" y="0.600" width="13" height="8.500" />
            <path d="M2.500 2.500H9v4.800H2.500z" fill="#fff" stroke="none" />
            <path d="M15.200 3v4" />
          </svg>
        </button>
        <button type="button" aria-label="Volume" className="ml-[14px]">
          <svg viewBox="0 0 18 14" className="h-[14px] w-[18px]" fill="none" stroke="#fff" strokeWidth="1.200" aria-hidden="true">
            <path d="M1 4.500h2.500L7 1.500v11l-3.500-3H1zM9 5q1.300 2 0 4M11 3.500q2.500 3.500 0 7" />
            <path d="M13.500 1.500q4 5.500 0 11" opacity="0.500" />
          </svg>
        </button>
        <div className="w-[82px] text-center text-[12px] leading-[18px]">
          1:58 PM
          <br />
          12/10/2023
        </div>
        <button type="button" aria-label="Notifications" className="ml-[2px]">
          <svg viewBox="0 0 17 17" className="size-[17px]" fill="none" stroke="#fff" strokeWidth="1.300" aria-hidden="true">
            <path d="M1 1.500h15v11h-5L8.500 15.500 6 12.500H1z" />
          </svg>
        </button>
        <span className="ml-5 h-10 w-px bg-[#66707f]" />
        <span className="w-1" />
      </div>
    </footer>
  );
}

export default function App() {
  return (
    <div className="flex min-h-screen flex-col">
      <div className="flex flex-1 border-r border-[#666]">
        <Launcher />
        <div className="flex min-w-0 flex-1 flex-col">
          <BrowserChrome />
          <div className="flex flex-1">
            <HadoopPage />
            <div className="w-[10px] shrink-0 bg-linear-to-b from-[#f08c66] from-75% to-[#e4e4e4] to-75%" />
          </div>
        </div>
      </div>
      <StatusBar />
      <Taskbar />
    </div>
  );
}
